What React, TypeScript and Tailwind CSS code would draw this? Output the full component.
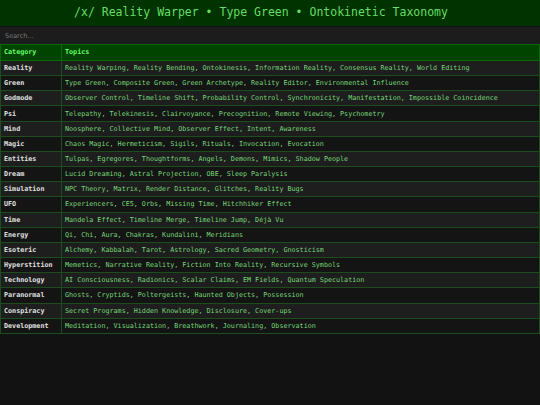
import { useState } from "react";

interface Row {
  category: string;
  topics: string;
}

const rows: Row[] = [
  { category: "Reality", topics: "Reality Warping, Reality Bending, Ontokinesis, Information Reality, Consensus Reality, World Editing" },
  { category: "Green", topics: "Type Green, Composite Green, Green Archetype, Reality Editor, Environmental Influence" },
  { category: "Godmode", topics: "Observer Control, Timeline Shift, Probability Control, Synchronicity, Manifestation, Impossible Coincidence" },
  { category: "Psi", topics: "Telepathy, Telekinesis, Clairvoyance, Precognition, Remote Viewing, Psychometry" },
  { category: "Mind", topics: "Noosphere, Collective Mind, Observer Effect, Intent, Awareness" },
  { category: "Magic", topics: "Chaos Magic, Hermeticism, Sigils, Rituals, Invocation, Evocation" },
  { category: "Entities", topics: "Tulpas, Egregores, Thoughtforms, Angels, Demons, Mimics, Shadow People" },
  { category: "Dream", topics: "Lucid Dreaming, Astral Projection, OBE, Sleep Paralysis" },
  { category: "Simulation", topics: "NPC Theory, Matrix, Render Distance, Glitches, Reality Bugs" },
  { category: "UFO", topics: "Experiencers, CE5, Orbs, Missing Time, Hitchhiker Effect" },
  { category: "Time", topics: "Mandela Effect, Timeline Merge, Timeline Jump, Déjà Vu" },
  { category: "Energy", topics: "Qi, Chi, Aura, Chakras, Kundalini, Meridians" },
  { category: "Esoteric", topics: "Alchemy, Kabbalah, Tarot, Astrology, Sacred Geometry, Gnosticism" },
  { category: "Hyperstition", topics: "Memetics, Narrative Reality, Fiction Into Reality, Recursive Symbols" },
  { category: "Technology", topics: "AI Consciousness, Radionics, Scalar Claims, EM Fields, Quantum Speculation" },
  { category: "Paranormal", topics: "Ghosts, Cryptids, Poltergeists, Haunted Objects, Possession" },
  { category: "Conspiracy", topics: "Secret Programs, Hidden Knowledge, Disclosure, Cover-ups" },
  { category: "Development", topics: "Meditation, Visualization, Breathwork, Journaling, Observation" },
];

export default function App() {
  const [query, setQuery] = useState("");
  const q = query.toLowerCase();
  const visible = rows.filter(
    (r) => r.category.toLowerCase().includes(q) || r.topics.toLowerCase().includes(q)
  );

  return (
    <div className="min-h-[405px] w-[540px] bg-[#121212] font-['DejaVu_Sans_Mono',monospace]">
      {/* Header */}
      <div className="flex h-[26px] items-center justify-center bg-[#003300] pr-[18px] text-[11.5px] text-[#66dd66]">
        /x/ Reality Warper • Type Green • Ontokinetic Taxonomy
      </div>

      {/* Search */}
      <div className="pt-px">
        <input
          value={query}
          onChange={(e) => setQuery(e.target.value)}
          placeholder="Search..."
          className="block h-[17px] w-full bg-[#1c1c1c] px-[5px] font-['DejaVu_Sans',sans-serif] text-[6.5px] text-[#ccc] outline-none placeholder:text-[#777]"
        />
      </div>

      {/* Table */}
      <table className="w-full border-collapse text-[6.73px]">
        <thead>
          <tr className="h-[16px] bg-[#004400]">
            <th className="w-[61px] border border-[#0a6a0a] px-[3px] text-left font-bold text-[#66ff66]">Category</th>
            <th className="border border-[#0a6a0a] px-[3px] text-left font-bold text-[#66ff66]">Topics</th>
          </tr>
        </thead>
        <tbody>
          {visible.map((r, i) => (
            <tr key={r.category} className={i % 2 === 0 ? "h-[15.17px] bg-[#1e1e1e]" : "h-[15.17px] bg-[#141414]"}>
              <td className="border border-[#1d4d1d] px-[3px] py-0 font-bold text-[#e0e0e0]">{r.category}</td>
              <td className="border border-[#1d4d1d] px-[3px] py-0 text-[#77d577]">{r.topics}</td>
            </tr>
          ))}
        </tbody>
      </table>
    </div>
  );
}
